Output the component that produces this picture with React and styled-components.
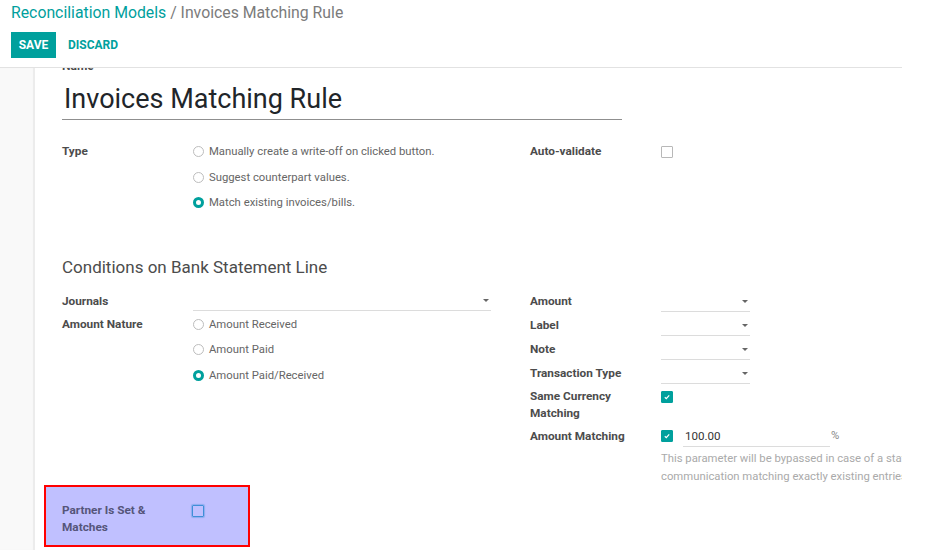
import React from "react";
import styled, { createGlobalStyle } from "styled-components";

const teal = "#00a09d";

const Global = createGlobalStyle`
  html, body {
    margin: 0;
    padding: 0;
    background: #fff;
    font-family: Roboto, "Liberation Sans", sans-serif;
  }
`;

const App = () => {
  return (
    <Frame>
      <Global />
      <ControlPanel>
        <Breadcrumb>
          <Crumb>Reconciliation Models</Crumb>
          <Current> / Invoices Matching Rule</Current>
        </Breadcrumb>
        <Buttons>
          <SaveButton>SAVE</SaveButton>
          <LinkButton>DISCARD</LinkButton>
        </Buttons>
      </ControlPanel>

      <Body>
        <Gutter />
        <Sheet>
          <Inner>
            <NameLabel>Name</NameLabel>
            <TitleInput>Invoices Matching Rule</TitleInput>

            <Columns top="19px">
              <Group width="468px">
                <Row>
                  <Label>Type</Label>
                  <Options>
                    <Radio label="Manually create a write-off on clicked button." />
                    <Radio label="Suggest counterpart values." />
                    <Radio label="Match existing invoices/bills." checked />
                  </Options>
                </Row>
              </Group>
              <Group width="420px">
                <Row h="25.5px">
                  <Label>Auto-validate</Label>
                  <Value>
                    <Check />
                  </Value>
                </Row>
              </Group>
            </Columns>

            <Heading>Conditions on Bank Statement Line</Heading>

            <Columns top="10px">
              <Group width="468px">
                <Row h="23px">
                  <Label>Journals</Label>
                  <Value>
                    <Select width="298px" />
                  </Value>
                </Row>
                <Row>
                  <Label>Amount Nature</Label>
                  <Options>
                    <Radio label="Amount Received" />
                    <Radio label="Amount Paid" />
                    <Radio label="Amount Paid/Received" checked />
                  </Options>
                </Row>
              </Group>
              <Group width="460px">
                <Row h="24px">
                  <Label>Amount</Label>
                  <Value>
                    <Select width="89px" />
                  </Value>
                </Row>
                <Row h="24px">
                  <Label>Label</Label>
                  <Value>
                    <Select width="89px" />
                  </Value>
                </Row>
                <Row h="24px">
                  <Label>Note</Label>
                  <Value>
                    <Select width="89px" />
                  </Value>
                </Row>
                <Row h="24px">
                  <Label>Transaction Type</Label>
                  <Value>
                    <Select width="89px" />
                  </Value>
                </Row>
                <Row h="39px" $wrap>
                  <Label $wrap>
                    Same Currency
                    <br />
                    Matching
                  </Label>
                  <Value $wrap>
                    <Check checked />
                  </Value>
                </Row>
                <Row h="24px">
                  <Label>Amount Matching</Label>
                  <Value>
                    <Check checked />
                    <NumberField>100.00</NumberField>
                    <Unit>%</Unit>
                  </Value>
                </Row>
                <Help>
                  <span>This parameter will be bypassed in case of a statement line</span>
                  <span>communication matching exactly existing entries</span>
                </Help>
              </Group>
            </Columns>

            <Highlight>
              <Label $wrap>
                Partner Is Set &amp;
                <br />
                Matches
              </Label>
              <Value $wrap>
                <Check focus />
              </Value>
            </Highlight>
          </Inner>
        </Sheet>
      </Body>
    </Frame>
  );
};

const Radio = ({ label, checked }) => (
  <Option>
    <RadioDot $checked={checked} />
    <OptionText>{label}</OptionText>
  </Option>
);

const Select = ({ width }) => (
  <SelectField style={{ width }}>
    <Caret />
  </SelectField>
);

const Check = ({ checked, focus }) => (
  <CheckBox $checked={checked} $focus={focus}>
    {checked && (
      <svg width="8" height="8" viewBox="0 0 8 8">
        <path d="M1.8 4.2 L3.3 5.6 L6.2 2.4" fill="none" stroke="#fff" strokeWidth="1.2" />
      </svg>
    )}
  </CheckBox>
);

export default App;

const Frame = styled.div`
  width: 902px;
  height: 550px;
  overflow: hidden;
  display: flex;
  flex-direction: column;
`;

const ControlPanel = styled.div`
  height: 67px;
  flex: none;
  border-bottom: 1px solid #e2e2e2;
  padding-left: 11px;
  box-sizing: content-box;
  position: relative;
  z-index: 2;
  background: #fff;
`;

const Breadcrumb = styled.div`
  font-size: 15.8px;
  line-height: 26px;
  white-space: nowrap;
`;

const Crumb = styled.span`
  color: ${teal};
`;

const Current = styled.span`
  color: #7b7b7b;
`;

const Buttons = styled.div`
  display: flex;
  align-items: center;
  margin-top: 6px;
`;

const SaveButton = styled.div`
  height: 26px;
  width: 45px;
  background: ${teal};
  color: #fff;
  font-size: 12px;
  font-weight: 700;
  display: flex;
  align-items: center;
  justify-content: center;
`;

const LinkButton = styled.div`
  color: ${teal};
  font-size: 12px;
  font-weight: 700;
  margin-left: 12px;
`;

const Body = styled.div`
  flex: 1;
  display: flex;
  min-height: 0;
`;

const Gutter = styled.div`
  width: 34px;
  flex: none;
  background: #f9f9f9;
  box-shadow: inset -1px 0 1px rgba(0, 0, 0, 0.06);
`;

const Sheet = styled.div`
  flex: 1;
  background: #fff;
  overflow: hidden;
  border-left: 1px solid #ececec;
`;

const Inner = styled.div`
  margin-top: -10px;
  padding-left: 27px;
`;

const NameLabel = styled.div`
  font-size: 12px;
  font-weight: 700;
  line-height: 16px;
  color: #4c4c4c;
`;

const TitleInput = styled.div`
  width: 560px;
  height: 46px;
  font-size: 27px;
  line-height: 36px;
  padding: 7px 0 2px 2px;
  color: #212529;
  border-bottom: 1px solid #8f8f8f;
  box-sizing: border-box;
`;

const Columns = styled.div`
  display: flex;
  margin-top: ${({ top }) => top};
`;

const Group = styled.div`
  width: ${({ width }) => width};
  flex: none;
  display: flex;
  flex-direction: column;
`;

const Row = styled.div`
  display: flex;
  align-items: ${({ $wrap }) => ($wrap ? "flex-start" : "center")};
  height: ${({ h }) => h || "auto"};
  padding-top: ${({ $wrap }) => ($wrap ? "3px" : "0")};
  box-sizing: border-box;
`;

const Label = styled.div`
  width: 131px;
  flex: none;
  align-self: flex-start;
  font-size: 11.8px;
  font-weight: 700;
  color: #4c4c4c;
  line-height: ${({ $wrap }) => ($wrap ? "17px" : "16px")};
  padding-top: ${({ $wrap }) => ($wrap ? "0" : "4px")};
`;

const Value = styled.div`
  display: flex;
  align-items: center;
  flex: 1;
  padding-top: ${({ $wrap }) => ($wrap ? "3px" : "0")};
`;

const Options = styled.div`
  display: flex;
  flex-direction: column;
`;

const Option = styled.div`
  height: 25.5px;
  display: flex;
  align-items: center;
`;

const RadioDot = styled.span`
  width: 11px;
  height: 11px;
  border-radius: 50%;
  box-sizing: border-box;
  border: ${({ $checked }) => ($checked ? `3px solid ${teal}` : "1px solid #bdbdbd")};
  background: #fff;
  margin-right: 5px;
`;

const OptionText = styled.span`
  font-size: 11.3px;
  color: #666;
`;

const SelectField = styled.div`
  height: 22px;
  border-bottom: 1px solid #dcdcdc;
  box-sizing: border-box;
  display: flex;
  align-items: center;
  justify-content: flex-end;
  padding-right: 2px;
`;

const Caret = styled.span`
  width: 0;
  height: 0;
  border-left: 3px solid transparent;
  border-right: 3px solid transparent;
  border-top: 3px solid #666;
  margin-top: 2px;
`;

const CheckBox = styled.span`
  width: 12px;
  height: 12px;
  box-sizing: border-box;
  flex: none;
  display: flex;
  align-items: center;
  justify-content: center;
  border: 1px solid
    ${({ $checked, $focus }) => ($checked ? teal : $focus ? "#3f8fd8" : "#b8b8b8")};
  background: ${({ $checked }) => ($checked ? teal : "transparent")};
  box-shadow: ${({ $focus }) => ($focus ? "0 0 1px 1px rgba(63,143,216,0.4)" : "none")};
  border-radius: 1px;
`;

const NumberField = styled.div`
  width: 147px;
  height: 22px;
  margin-left: 10px;
  padding-left: 2px;
  font-size: 11.6px;
  line-height: 22px;
  color: #333;
  border-bottom: 1px solid #dcdcdc;
  box-sizing: border-box;
`;

const Unit = styled.span`
  font-size: 11.3px;
  color: #888;
  margin-left: 1px;
`;

const Help = styled.div`
  margin-top: 2px;
  padding-left: 131px;
  font-size: 11.3px;
  line-height: 18px;
  color: #aaa;
  display: flex;
  flex-direction: column;
  white-space: nowrap;
`;

const Heading = styled.div`
  margin-top: 39px;
  font-size: 17px;
  line-height: 24px;
  color: #4c4c4c;
`;

const Highlight = styled.div`
  margin-left: -18px;
  margin-top: -1px;
  width: 206px;
  height: 62px;
  box-sizing: border-box;
  border: 2px solid #f00;
  background: #c0c0ff;
  display: flex;
  align-items: flex-start;
  padding: 15px 0 0 16px;
  & ${Label} {
    color: #55557a;
    width: 130px;
  }
`;
